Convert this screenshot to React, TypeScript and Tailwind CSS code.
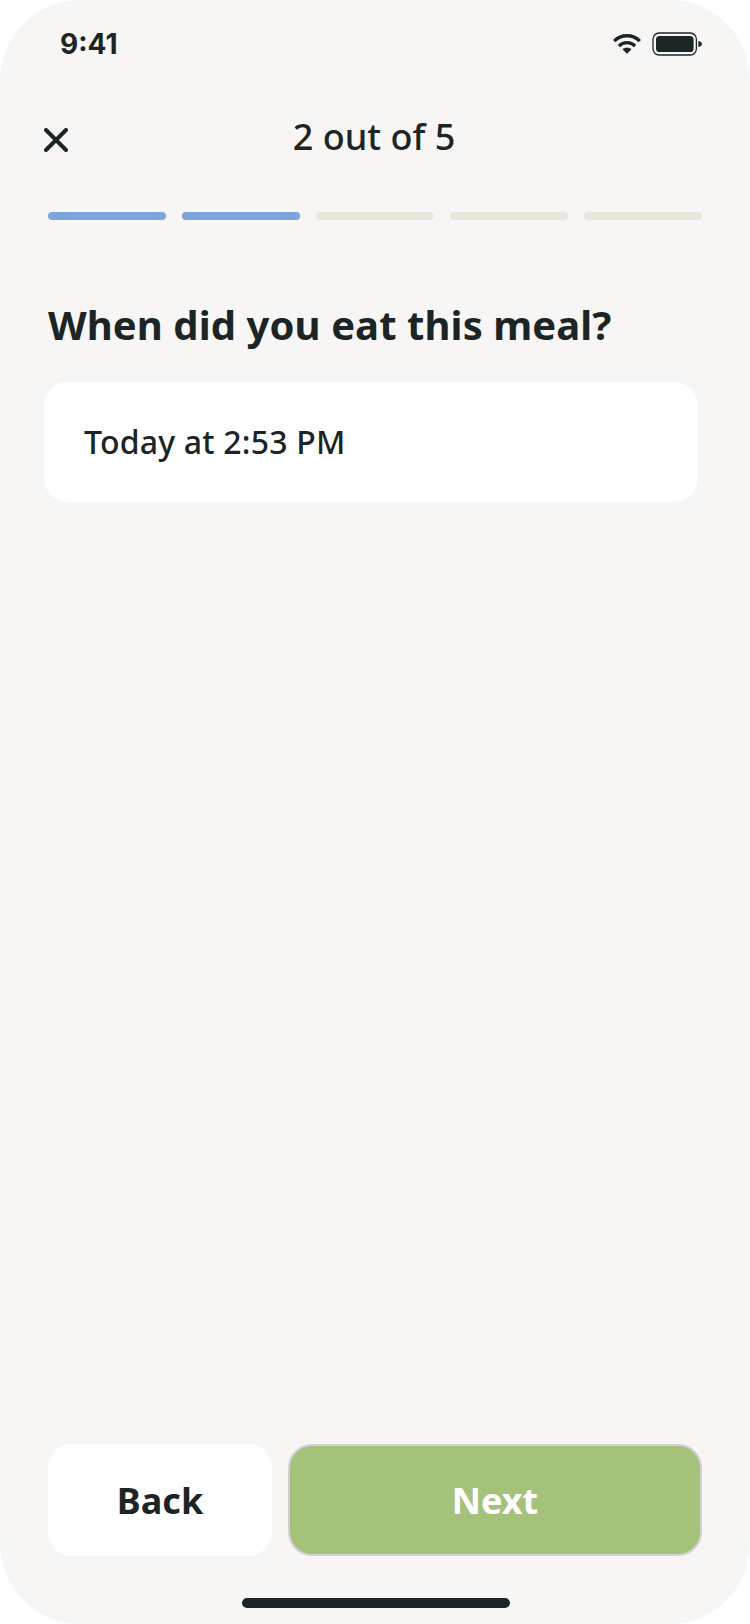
const TOTAL_STEPS = 5;

function WifiIcon() {
  return (
    <svg className="h-5 w-7" viewBox="0 0 28 20" fill="none" aria-hidden="true">
      <path d="M1.2 7.2C8 -0.1 20 -0.1 26.8 7.2" stroke="currentColor" strokeWidth="3.3" />
      <path d="M5.9 12C10.3 7.4 17.7 7.4 22.1 12" stroke="currentColor" strokeWidth="3.3" />
      <path
        d="M14 19.4L9.8 15.3C12 13.4 16 13.4 18.2 15.3L14 19.4Z"
        fill="currentColor"
        stroke="currentColor"
        strokeWidth="0.6"
        strokeLinejoin="round"
      />
    </svg>
  );
}

function BatteryIcon() {
  return (
    <svg className="h-6 w-[50px]" viewBox="0 0 50 24" fill="none" aria-hidden="true">
      <rect x="1" y="1" width="43.4" height="22" rx="6.2" stroke="currentColor" strokeWidth="1.3" />
      <rect x="4" y="4" width="37.6" height="16" rx="3.6" fill="currentColor" />
      <path d="M46.4 8.9C48.8 9.4 50 10.6 50 12C50 13.4 48.8 14.6 46.4 15.1V8.9Z" fill="currentColor" />
    </svg>
  );
}

function StatusBar() {
  return (
    <div className="flex h-[88px] items-center justify-between pr-12 pl-[60px]">
      <span className="font-['Inter',sans-serif] text-[28px] leading-8 font-bold">9:41</span>
      <div className="flex items-center gap-[11px]">
        <WifiIcon />
        <BatteryIcon />
      </div>
    </div>
  );
}

function Header({ step }: { step: number }) {
  return (
    <header className="grid h-24 grid-cols-[24px_1fr_24px] items-center px-11">
      <button aria-label="Close" className="mt-2">
        <svg className="size-6" viewBox="0 0 24 24" fill="none" aria-hidden="true">
          <path
            d="M2 2L22 22M22 2L2 22"
            stroke="currentColor"
            strokeWidth="4"
            strokeLinecap="round"
          />
        </svg>
      </button>
      <h2 className="pt-0.5 pr-0.5 text-center text-4xl leading-[48px] font-medium">
        {step} out of {TOTAL_STEPS}
      </h2>
    </header>
  );
}

function Progress({ step }: { step: number }) {
  return (
    <div className="mt-7 flex gap-4 px-12">
      {Array.from({ length: TOTAL_STEPS }, (_, i) => (
        <div
          key={i}
          className={`h-2 flex-1 rounded-full ${i < step ? "bg-[#7da5db]" : "bg-[#ebe5de]"}`}
        />
      ))}
    </div>
  );
}

export default function App() {
  const step = 2;

  return (
    <div className="bg-white">
      <div className="flex h-[1624px] w-[750px] flex-col rounded-[80px] bg-[#f7f6f4] font-['Noto_Sans',sans-serif] text-[#1c2526]">
        <StatusBar />
        <Header step={step} />
        <Progress step={step} />

        <main className="flex-1 pt-[77px]">
          <h1 className="px-12 text-[40px] leading-[56px] font-bold tracking-[0.08px]">
            When did you eat this meal?
          </h1>
          <button className="mt-[29px] ml-11 flex h-[120px] w-[654px] items-center rounded-3xl bg-white px-10 text-[32px] font-medium tracking-[0.2px]">
            Today at 2:53 PM
          </button>
        </main>

        <footer className="px-12">
          <div className="flex gap-4 text-4xl font-bold">
            <button className="h-28 w-56 rounded-3xl bg-white pt-0.5">Back</button>
            <button className="h-28 flex-1 rounded-3xl border-2 border-[#d1d1d1] bg-[#a4c27a] pt-0.5 text-white">
              Next
            </button>
          </div>
          <div className="mx-auto mt-[42px] mb-4 h-2.5 w-[268px] translate-x-px rounded-full bg-[#1c2526]" />
        </footer>
      </div>
    </div>
  );
}
